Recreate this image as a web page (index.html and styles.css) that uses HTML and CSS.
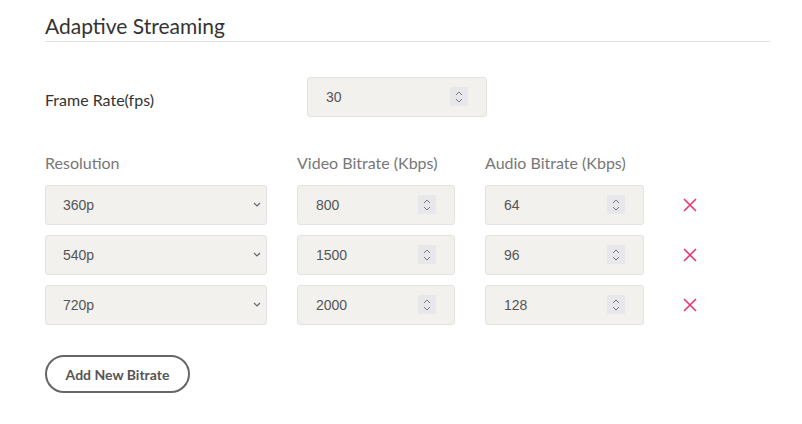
FILE: index.html
```html
<!DOCTYPE html>
<html>
<head>
<meta charset="utf-8">
<link rel="stylesheet" href="styles.css">
</head>
<body>
<section class="panel">
  <h2 class="title">Adaptive Streaming</h2>
  <div class="fps-row">
    <label class="fps-label">Frame Rate(fps)</label>
    <div class="wrap fps-wrap">
      <input class="field num" type="number" value="30">
      <span class="spin"><svg width="8" height="14" viewBox="0 0 8 14"><path d="M1 5L4 2L7 5M1 9L4 12L7 9" stroke="#7a7a7a" stroke-width="1" fill="none"/></svg></span>
    </div>
  </div>
  <div class="grid">
    <div class="head">Resolution</div>
    <div class="head">Video Bitrate (Kbps)</div>
    <div class="head">Audio Bitrate (Kbps)</div>
    <div></div>

    <div class="wrap"><select class="field sel"><option>360p</option></select><span class="caret"><svg width="8" height="5" viewBox="0 0 8 5"><path d="M1 1L4 4L7 1" stroke="#666" stroke-width="1.2" fill="none"/></svg></span></div>
    <div class="wrap"><input class="field num" type="number" value="800"><span class="spin"><svg width="8" height="14" viewBox="0 0 8 14"><path d="M1 5L4 2L7 5M1 9L4 12L7 9" stroke="#7a7a7a" stroke-width="1" fill="none"/></svg></span></div>
    <div class="wrap"><input class="field num" type="number" value="64"><span class="spin"><svg width="8" height="14" viewBox="0 0 8 14"><path d="M1 5L4 2L7 5M1 9L4 12L7 9" stroke="#7a7a7a" stroke-width="1" fill="none"/></svg></span></div>
    <span class="remove"><svg width="14" height="14" viewBox="0 0 14 14"><path d="M1 1L13 13M13 1L1 13" stroke="#ec2d6e" stroke-width="1.5" fill="none"/></svg></span>

    <div class="wrap"><select class="field sel"><option>540p</option></select><span class="caret"><svg width="8" height="5" viewBox="0 0 8 5"><path d="M1 1L4 4L7 1" stroke="#666" stroke-width="1.2" fill="none"/></svg></span></div>
    <div class="wrap"><input class="field num" type="number" value="1500"><span class="spin"><svg width="8" height="14" viewBox="0 0 8 14"><path d="M1 5L4 2L7 5M1 9L4 12L7 9" stroke="#7a7a7a" stroke-width="1" fill="none"/></svg></span></div>
    <div class="wrap"><input class="field num" type="number" value="96"><span class="spin"><svg width="8" height="14" viewBox="0 0 8 14"><path d="M1 5L4 2L7 5M1 9L4 12L7 9" stroke="#7a7a7a" stroke-width="1" fill="none"/></svg></span></div>
    <span class="remove"><svg width="14" height="14" viewBox="0 0 14 14"><path d="M1 1L13 13M13 1L1 13" stroke="#ec2d6e" stroke-width="1.5" fill="none"/></svg></span>

    <div class="wrap"><select class="field sel"><option>720p</option></select><span class="caret"><svg width="8" height="5" viewBox="0 0 8 5"><path d="M1 1L4 4L7 1" stroke="#666" stroke-width="1.2" fill="none"/></svg></span></div>
    <div class="wrap"><input class="field num" type="number" value="2000"><span class="spin"><svg width="8" height="14" viewBox="0 0 8 14"><path d="M1 5L4 2L7 5M1 9L4 12L7 9" stroke="#7a7a7a" stroke-width="1" fill="none"/></svg></span></div>
    <div class="wrap"><input class="field num" type="number" value="128"><span class="spin"><svg width="8" height="14" viewBox="0 0 8 14"><path d="M1 5L4 2L7 5M1 9L4 12L7 9" stroke="#7a7a7a" stroke-width="1" fill="none"/></svg></span></div>
    <span class="remove"><svg width="14" height="14" viewBox="0 0 14 14"><path d="M1 1L13 13M13 1L1 13" stroke="#ec2d6e" stroke-width="1.5" fill="none"/></svg></span>
  </div>
  <button class="add-btn">Add New Bitrate</button>
</section>
</body>
</html>
```
FILE: styles.css
```css
html, body {
  margin: 0;
  padding: 0;
  background: #fff;
}
body {
  font-family: Lato, "Open Sans", sans-serif;
  color: #333;
}
.panel {
  padding: 0 32px 0 45px;
}
.title {
  margin: 0;
  padding-top: 13px;
  font-size: 21px;
  font-weight: 400;
  line-height: 26px;
  color: #333;
  padding-bottom: 2px;
  border-bottom: 1px solid #e3e3e3;
}
.fps-row {
  display: flex;
  align-items: flex-start;
  margin-top: 35px;
}
.fps-label {
  width: 262px;
  font-size: 16px;
  line-height: 18px;
  padding-top: 14px;
  color: #333;
}
.wrap {
  position: relative;
  height: 40px;
}
.fps-wrap {
  width: 180px;
}
.field {
  box-sizing: border-box;
  display: block;
  width: 100%;
  height: 40px;
  margin: 0;
  background: #f2f1ee;
  border: 1px solid #e4e3df;
  border-radius: 3px;
  font-family: "Liberation Sans", Arial, sans-serif;
  font-size: 14px;
  color: #555;
  outline: none;
}
.num {
  padding: 0 40px 0 18px;
  -moz-appearance: textfield;
  appearance: textfield;
}
.num::-webkit-inner-spin-button,
.num::-webkit-outer-spin-button {
  -webkit-appearance: none;
  margin: 0;
}
.spin {
  position: absolute;
  right: 19px;
  top: 10px;
  width: 18px;
  height: 19px;
  background: #e8e7ec;
  display: flex;
  align-items: center;
  justify-content: center;
}
.sel {
  -webkit-appearance: none;
  appearance: none;
  padding: 0 30px 0 17px;
}
.caret {
  position: absolute;
  right: 6px;
  top: 17px;
  display: flex;
}
.grid {
  display: grid;
  grid-template-columns: 222px 158px 159px 1fr;
  column-gap: 30px;
  row-gap: 10px;
  margin-top: 36px;
}
.head {
  font-size: 16px;
  color: #777;
  line-height: 20px;
  margin-bottom: 2px;
}
.remove {
  display: flex;
  align-items: center;
  padding-left: 9px;
}
.add-btn {
  margin-top: 30px;
  width: 145px;
  height: 38px;
  border: 2px solid #666;
  border-radius: 19px;
  background: #fff;
  font-family: Lato, sans-serif;
  font-weight: 700;
  font-size: 14px;
  color: #555;
  padding: 0;
}
```
